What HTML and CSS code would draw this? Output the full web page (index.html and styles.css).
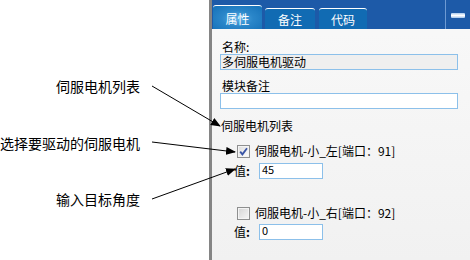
FILE: index.html
```html
<!DOCTYPE html>
<html lang="zh-CN">

<head>
    <meta charset="UTF-8" />
    <title>伺服电机属性</title>
    <link rel="stylesheet" href="styles.css">
</head>

<body>
    <div class="notes">
        <p class="note note-list">伺服电机列表</p>
        <p class="note note-pick">选择要驱动的伺服电机</p>
        <p class="note note-angle">输入目标角度</p>
    </div>

    <div class="panel">
        <div class="header">
            <div class="tab active">属性</div>
            <div class="tab">备注</div>
            <div class="tab tab3">代码</div>
            <div class="header-right">
                <span class="sep"></span>
                <span class="minus"></span>
            </div>
        </div>

        <div class="content">
            <p class="label">名称:</p>
            <div class="field readonly">多伺服电机驱动</div>
            <p class="label label-gap">模块备注</p>
            <div class="field"></div>

            <p class="section">伺服电机列表</p>

            <div class="servo">
                <span class="check on">
                    <svg width="11" height="11" viewBox="0 0 11 11">
                        <path d="M2.2 5.6 L4.4 8.4 L9 2.2" fill="none" stroke="#3a55a6" stroke-width="1.8" />
                    </svg>
                </span>
                <span class="servo-name">伺服电机-小_左[端口：91]</span>
            </div>
            <div class="value">
                <span class="value-label">值<b>:</b></span>
                <div class="value-box">45</div>
            </div>

            <div class="servo servo2">
                <span class="check"></span>
                <span class="servo-name">伺服电机-小_右[端口：92]</span>
            </div>
            <div class="value value2">
                <span class="value-label">值<b>:</b></span>
                <div class="value-box">0</div>
            </div>
        </div>
    </div>

    <svg class="arrows" width="470" height="260" viewBox="0 0 470 260">
        <defs>
            <marker id="head" markerWidth="10" markerHeight="8" refX="9" refY="4" orient="auto" markerUnits="userSpaceOnUse">
                <path d="M0 0 L10 4 L0 8 Z" fill="#000" />
            </marker>
        </defs>
        <line x1="152" y1="86" x2="220" y2="126" stroke="#000" stroke-width="1" marker-end="url(#head)" />
        <line x1="152" y1="142" x2="235" y2="152" stroke="#000" stroke-width="1" marker-end="url(#head)" />
        <line x1="152" y1="199" x2="235" y2="169" stroke="#000" stroke-width="1" marker-end="url(#head)" />
    </svg>
</body>

</html>
```

FILE: styles.css
```css
body {
    margin: 0;
    width: 470px;
    height: 260px;
    overflow: hidden;
    display: flex;
    position: relative;
    background: #fff;
    font-family: "Noto Sans CJK SC", sans-serif;
    color: #000;
}

p {
    margin: 0;
}

.notes {
    width: 209px;
    box-sizing: border-box;
    padding: 76px 69px 0 0;
    text-align: right;
    font-size: 14px;
    line-height: 20px;
}

.note-pick {
    margin-top: 37px;
}

.note-angle {
    margin-top: 36px;
}

.panel {
    flex: 1;
    display: flex;
    flex-direction: column;
    border-left: 3px solid #858585;
    background: linear-gradient(#f9f9f9, #f1f1f1);
}

.header {
    height: 29px;
    flex: none;
    display: flex;
    align-items: flex-end;
    gap: 3px;
    padding-left: 1px;
    background: #1d5aa8;
}

.tab {
    width: 50px;
    height: 21px;
    box-sizing: border-box;
    padding-top: 3px;
    border-top: 1px solid #fff;
    border-radius: 3px 3px 0 0;
    background: #116bb3;
    color: #fff;
    font-size: 12px;
    line-height: 16px;
    text-align: center;
}

.tab.active {
    width: 49px;
    height: 24px;
    padding-top: 5px;
    background: radial-gradient(ellipse at 50% 55%, #5cb0e6 0%, #2a86c9 45%, #1470b8 100%);
}

.tab3 {
    width: 48px;
    margin-left: 1px;
}

.header-right {
    margin-left: auto;
    height: 100%;
    display: flex;
    align-items: center;
}

.sep {
    width: 1px;
    height: 100%;
    background: #6d9ad3;
}

.minus {
    width: 14px;
    height: 5px;
    margin: 2px 5px 0 5px;
    border-radius: 1px;
    background: linear-gradient(#a9c9ef, #ffffff 50%, #a3c4ec);
}

.content {
    padding: 11px 12px 0 8px;
    font-size: 12px;
    line-height: 14px;
}

.label {
    padding-left: 2px;
}

.label-gap {
    margin-top: 9px;
}

.field {
    height: 16px;
    box-sizing: border-box;
    border: 1px solid #8cc0ea;
    background: #fff;
    padding-left: 1px;
    line-height: 14px;
    overflow: hidden;
}

.field.readonly {
    background: #efefef;
}

.section {
    margin-top: 10px;
    padding-left: 1px;
}

.servo {
    margin-top: 11px;
    padding-left: 17px;
    display: flex;
    align-items: center;
    height: 14px;
}

.servo2 {
    margin-top: 27px;
}

.check {
    width: 13px;
    height: 13px;
    box-sizing: border-box;
    border: 1px solid #8e8f8f;
    background: linear-gradient(135deg, #d4d4d4, #f6f6f6);
    box-shadow: inset 0 0 0 1px #f4f4f4;
    margin-right: 5px;
    display: flex;
    align-items: center;
    justify-content: center;
}

.check.on {
    background: linear-gradient(135deg, #dcdcdc, #ffffff);
}

.value {
    margin-top: 5px;
    padding-left: 14px;
    display: flex;
    align-items: flex-start;
}

.value2 {
    margin-top: 4px;
}

.value-label {
    width: 25px;
    line-height: 15px;
}

.value-box {
    width: 64px;
    height: 16px;
    box-sizing: border-box;
    border: 1px solid #8cc0ea;
    background: #fff;
    padding-left: 2px;
    font-size: 11px;
    line-height: 11px;
}

.arrows {
    position: absolute;
    top: 0;
    left: 0;
    pointer-events: none;
}
```
